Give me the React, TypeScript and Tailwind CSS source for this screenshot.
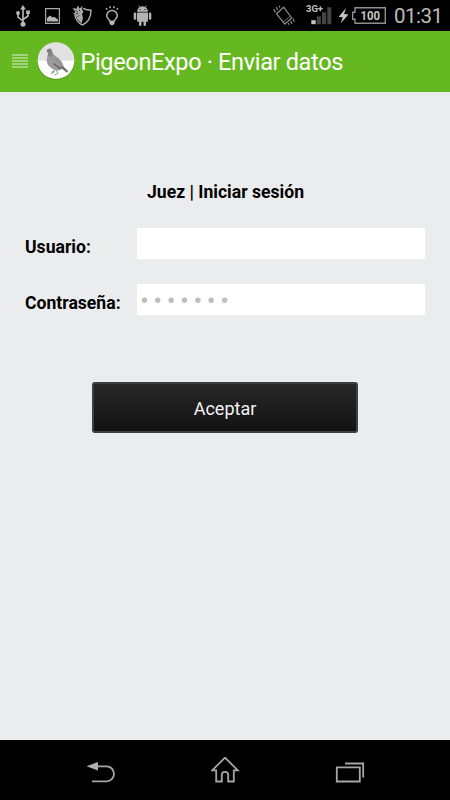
import { useState } from 'react';

function UsbIcon() {
  return (
    <svg className="ml-4 h-[22px] w-[14px]" viewBox="0 0 14 22" fill="none" stroke="#b9b9b9" strokeWidth="1.6">
      <path d="M7 3v16M2 9v3l5 4M12 8v3l-5 3.500" />
      <path d="M7 0l2.800 4.500H4.200z" fill="#b9b9b9" stroke="none" />
      <circle cx="2" cy="8" r="1.900" fill="#b9b9b9" stroke="none" />
      <path d="M10.200 5.500h3.600v3.600h-3.600z" fill="#b9b9b9" stroke="none" />
      <circle cx="7" cy="19.200" r="2.500" fill="#b9b9b9" stroke="none" />
    </svg>
  );
}

function PictureIcon() {
  return (
    <svg className="ml-[15px] h-[16px] w-[15px]" viewBox="0 0 15 16" fill="none">
      <path d="M.6.600h13.800v14.800H.6z" stroke="#a8a8a8" strokeWidth="1.200" />
      <path d="M2 13.500V10l3-2.500 2.500 2L9 8.800l4 2.700v2z" fill="#b4b4b4" />
    </svg>
  );
}

function ShieldIcon() {
  return (
    <svg className="ml-3 h-[21px] w-[20px]" viewBox="0 0 20 21" fill="none" stroke="#a9a9a9">
      <path d="M11 3.300c2.500 1.300 5 1.900 8 1.900 0 7.500-2.600 12-8.500 14.800C6 18 3.500 14.500 2.800 9.500" strokeWidth="1.500" />
      <path d="M.5 3l4 .8L5.800.500l1.700 3L10.500 1 10 4.500l1.500 2.200L10 9l1 4-1.500 5.500-4-4L3.500 10 1 8.500l2.500-1.200z" fill="#a9a9a9" stroke="none" />
      <path d="M3.500 5.500l2 1M7 4.500l1 2M4 9l2.500-1M5.500 12l2-2" stroke="#222" strokeWidth=".8" />
    </svg>
  );
}

function BulbIcon() {
  return (
    <svg className="ml-[13px] h-[21px] w-[14px]" viewBox="0 0 14 21" fill="none" stroke="#b2b2b2" strokeWidth="1.500">
      <path d="M5 16.300c0-1.600-3.300-2.300-3.300-5.500a5.300 5.300 0 0 1 10.600 0c0 3.200-3.300 3.900-3.300 5.500z" />
      <path d="M4.500 16h5v2.500L8 20.200H6l-1.500-1.700z" fill="#b8b8b8" stroke="none" />
      <path d="M1.200 3.200l1 1.500M4.800 1.200l.4 2M9.200 1.200l-.4 2M12.800 3.200l-1 1.500" />
    </svg>
  );
}

function AndroidIcon() {
  return (
    <svg className="ml-[14px] h-[21px] w-[19px]" viewBox="0 0 19 21" fill="#b3b3b3">
      <path d="M4 6.800a5.500 5.500 0 0 1 11 0z" />
      <path d="M5.700.5l1.600 2.500M13.300.5l-1.600 2.500" stroke="#b3b3b3" strokeWidth=".8" />
      <path d="M4 7.600h11v8.200q0 1-1 1H5q-1 0-1-1z" />
      <rect x=".7" y="7.500" width="2.500" height="7.300" rx="1.250" />
      <rect x="15.800" y="7.500" width="2.500" height="7.300" rx="1.250" />
      <rect x="6" y="15" width="2.500" height="6" rx="1.200" />
      <rect x="10.500" y="15" width="2.500" height="6" rx="1.200" />
      <circle cx="7" cy="4.500" r=".6" fill="#000" />
      <circle cx="12" cy="4.500" r=".6" fill="#000" />
    </svg>
  );
}

function VibrateIcon() {
  return (
    <svg className="h-[21px] w-[22px]" viewBox="0 0 22 21" fill="none" stroke="#8c8c8c" strokeWidth="1.200">
      <path d="M3.500 8.800L10.600 2.200l8.200 10.800-7 6z" strokeLinejoin="round" />
      <path d="M10.300 17l7.200-6" strokeWidth=".8" />
      <path d="M.8 4l1.500 3.500M3.300 2l1.200 3M6 .8l.8 1.700M15.200 18l.8 1.800M17.700 16l1.300 3M20 13.500l1.500 3.500" />
    </svg>
  );
}

function SignalIcon() {
  return (
    <svg className="ml-[11px] h-[21px] w-[26px] overflow-visible" viewBox="0 0 26 21">
      <text x="0" y="7.300" fill="#c4c4c4" fontFamily="Roboto, sans-serif" fontSize="9.500" fontWeight="700" textLength="17" lengthAdjust="spacingAndGlyphs">
        3G+
      </text>
      <path d="M5.300 15.200h4.400v4H5.300z" fill="#c4c4c4" />
      <path d="M10.700 11.500h4.200v7.700h-4.200zM16 7.200h4.200v12H16zM21.300 2.200h4v17h-4z" fill="#444" />
    </svg>
  );
}

function BatteryIcon() {
  return (
    <svg className="ml-[6px] h-[21px] w-[49px]" viewBox="0 0 49 21" fill="none">
      <path d="M8 3L.5 12l4.300.2L2.500 18.500 10.500 9.500l-4.500-.4z" fill="#c4c4c4" />
      <path d="M17 2.700h30.300v15.600H17v-4h-2.300V7.200H17z" stroke="#8f8f8f" strokeWidth="1.400" />
      <text x="22.500" y="15.200" fill="#c4c4c4" fontFamily="Roboto, sans-serif" fontSize="12.500" fontWeight="700" textLength="19.500" lengthAdjust="spacingAndGlyphs">
        100
      </text>
    </svg>
  );
}

function PigeonLogo() {
  return (
    <svg className="ml-[9px] h-[38px] w-[38px]" viewBox="0 0 38 38">
      <circle cx="19" cy="19.300" r="18.600" fill="#4f9618" />
      <circle cx="19" cy="18.700" r="18.300" fill="#fff" />
      <path d="M.7 18.700a18.300 18.300 0 0 1 36.600 0z" fill="#e2e2e2" />
      <path d="M9 9.300l1.200-1.700c1-1.500 4.400-1.500 4.900.8.500 2.500 1.400 4.100 4.200 6.100 3.700 2.500 6.300 5.300 7.300 9.800l5.100 5.500-1.900 1-5-4-2.600 1.700c-5-.2-9.400-2.600-11.700-6.500-1.700-3.500-.5-6.500.3-9.300.3-1.900 0-2.800-.5-3.700z" fill="#9b9b9b" />
      <path d="M10.200 7.900c1.400-1.500 4.100-1.100 4.600 1l1 4.500c-1.400 2-3.600 1.600-4.800.3.300-2-.2-3.500-1-4.200z" fill="#858585" />
      <path d="M14.500 16.500c5 .7 8.500 4.300 10 8.500" stroke="#8a8a8a" strokeWidth="1.200" fill="none" />
      <path d="M16.500 21.500l5.500 4M24.500 24.500l5.500 5M20.500 25.500l4 1" stroke="#656565" strokeWidth="1.500" fill="none" />
      <path d="M17.500 27.500l-.5 2.800-3 1.200M19.500 28l1.300 3.400-3.200 1.600" stroke="#888" strokeWidth=".9" fill="none" />
      <path d="M15 30.500l2.200-1.300" stroke="#5dcf61" strokeWidth="1.500" />
      <circle cx="12.300" cy="9" r=".6" fill="#444" />
    </svg>
  );
}

function StatusBar() {
  return (
    <div className="flex h-[31px] items-center bg-black">
      <UsbIcon />
      <PictureIcon />
      <ShieldIcon />
      <BulbIcon />
      <AndroidIcon />
      <div className="ml-auto flex items-center pr-[8px]">
        <VibrateIcon />
        <SignalIcon />
        <BatteryIcon />
        <span className="ml-[7px] w-[48px] pt-[2px] text-[20.500px] leading-[29px] tracking-[-0.500px] whitespace-nowrap text-[#bcbcbc]">
          01:31
        </span>
      </div>
    </div>
  );
}

function Header() {
  return (
    <header className="flex h-[60.500px] items-center bg-[#66b821]">
      <button className="ml-3 flex w-4 shrink-0 flex-col gap-px" aria-label="Menú">
        <span className="h-[2px] w-full bg-[#a3d37a]" />
        <span className="h-[2px] w-full bg-[#a3d37a]" />
        <span className="h-[2px] w-full bg-[#a3d37a]" />
        <span className="h-[2px] w-full bg-[#a3d37a]" />
        <span className="h-[2px] w-full bg-[#a3d37a]" />
      </button>
      <PigeonLogo />
      <h1 className="ml-[5.500px] pt-[2px] text-[23.500px] tracking-[-0.340px] whitespace-nowrap text-white">
        PigeonExpo · Enviar datos
      </h1>
    </header>
  );
}

function NavBar() {
  return (
    <nav className="flex h-[60px] items-center justify-between bg-black pt-[2px] pr-[85px] pl-[86px]">
      <svg className="h-7 w-[30px]" viewBox="0 0 30 28" fill="none" stroke="#a6a6a6" strokeWidth="1.800">
        <path d="M10 9.300h10.500a7.500 7.500 0 0 1 0 15H6" />
        <path d="M.5 9.300l11.500-4.300v8.500z" fill="#b0b0b0" stroke="none" />
      </svg>
      <svg className="h-7 w-[30px]" viewBox="0 0 30 28" fill="none" stroke="#a6a6a6" strokeWidth="1.800">
        <path d="M14 0.700L26.800 13.300H22.800V24.500H17.200V18a3.200 3.200 0 0 0-6.400 0v6.500H5.200V13.300H1.200z" />
      </svg>
      <svg className="h-7 w-[30px]" viewBox="0 0 30 28" fill="none" stroke="#a6a6a6" strokeWidth="1.800">
        <path d="M1.800 10.300h23v14.200h-23zM10 6.500h18.200v14" />
      </svg>
    </nav>
  );
}

export default function App() {
  const [user, setUser] = useState('');
  const [password, setPassword] = useState('');

  return (
    <div className="flex h-[800px] w-[450px] flex-col overflow-hidden bg-[#ebecee] font-['Roboto',sans-serif]">
      <StatusBar />
      <Header />
      <main className="flex flex-1 flex-col px-[25px] pt-[88px]">
        <h2 className="pl-px text-center text-[17.600px] leading-6 font-bold text-black">Juez | Iniciar sesión</h2>
        <form className="flex flex-col" onSubmit={(e) => e.preventDefault()}>
          <label className="mt-[24px] flex h-[31px] text-[17.600px] font-bold">
            <span className="w-[112px] shrink-0 pt-[6px] whitespace-nowrap">Usuario:</span>
            <input
              className="w-[288px] bg-white px-1 font-normal outline-none"
              value={user}
              onChange={(e) => setUser(e.target.value)}
            />
          </label>
          <label className="mt-[25px] flex h-[31px] text-[17.600px] font-bold">
            <span className="w-[112px] shrink-0 pt-[6px] whitespace-nowrap">Contraseña:</span>
            <input
              className="w-[288px] bg-white pt-[4px] pl-[3px] text-[26px] leading-[27px] font-normal tracking-[4.600px] outline-none placeholder:text-[#bdbdbd]"
              type="password"
              placeholder="•••••••"
              value={password}
              onChange={(e) => setPassword(e.target.value)}
            />
          </label>
          <button className="mt-[67px] ml-[67px] h-[51px] w-[266px] rounded-[3px] border-2 border-[#3d3f40] bg-linear-to-b from-[#282828] to-[#121212] pt-[3px] text-[18px] text-[#f3f3f3]">
            Aceptar
          </button>
        </form>
      </main>
      <NavBar />
    </div>
  );
}
